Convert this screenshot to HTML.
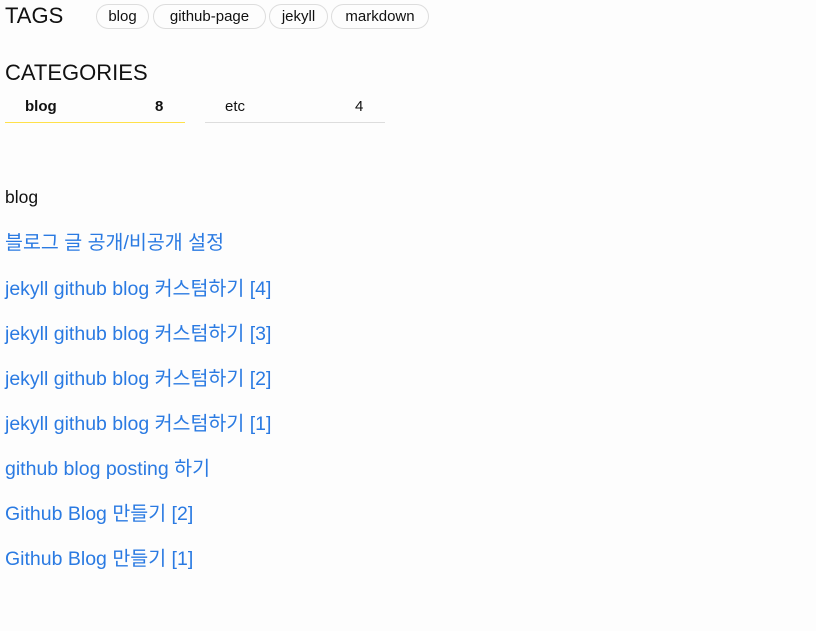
<!DOCTYPE html>
<html><head><meta charset="utf-8"><style>
body{margin:0;background:#fdfdfd;color:#111;font-family:"Liberation Sans","Noto Sans CJK KR",sans-serif;width:816px;height:631px;overflow:hidden;position:relative}
.a{position:absolute;white-space:nowrap}
.h{font-size:22px;color:#111}
.pill{position:absolute;top:4px;height:23px;border:1px solid #ddd;border-radius:13px;font-size:15px;line-height:23px;text-align:center;color:#111;box-sizing:content-box}
.cat{position:absolute;top:93px;width:180px;height:29px;font-size:15px;line-height:28px}
.cat span{position:absolute}
.l{position:absolute;left:5px;font-size:19.5px;color:#2a7ae2;white-space:nowrap}
</style></head><body>
<div class="a h" style="left:5px;top:3px">TAGS</div>
<div class="pill" style="left:96px;width:51px">blog</div>
<div class="pill" style="left:153px;width:111px">github-page</div>
<div class="pill" style="left:269px;width:57px">jekyll</div>
<div class="pill" style="left:331px;width:96px">markdown</div>
<div class="a h" style="left:5px;top:60px">CATEGORIES</div>
<div class="cat" style="left:5px;border-bottom:1px solid #ffe14a;font-weight:bold"><span style="left:20px">blog</span><span style="left:150px">8</span></div>
<div class="cat" style="left:205px;border-bottom:1px solid #ddd"><span style="left:20px">etc</span><span style="left:150px">4</span></div>
<div class="a" style="left:5px;top:187px;font-size:17.5px">blog</div>
<div class="l" style="top:226px">블로그 글 공개/비공개 설정</div>
<div class="l" style="top:272px">jekyll github blog 커스텀하기 [4]</div>
<div class="l" style="top:317px">jekyll github blog 커스텀하기 [3]</div>
<div class="l" style="top:362px">jekyll github blog 커스텀하기 [2]</div>
<div class="l" style="top:407px">jekyll github blog 커스텀하기 [1]</div>
<div class="l" style="top:452px">github blog posting 하기</div>
<div class="l" style="top:497px">Github Blog 만들기 [2]</div>
<div class="l" style="top:542px">Github Blog 만들기 [1]</div>
</body></html>
